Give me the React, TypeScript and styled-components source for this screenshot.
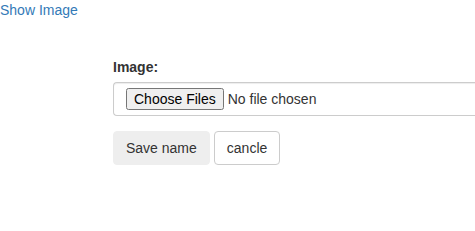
import React from "react";
import styled, { createGlobalStyle } from "styled-components";

const Global = createGlobalStyle`
  html, body { margin: 0; padding: 0; background: #fff; overflow: hidden; }
  body {
    font-family: "Liberation Sans", Arial, Helvetica, sans-serif;
    font-size: 14px;
    line-height: 20px;
    color: #333;
  }
  * { box-sizing: border-box; }
`;

const Page = styled.div`
  display: flex;
  flex-direction: column;
  width: 475px;
  height: 231px;
  overflow: hidden;
`;

const TopLink = styled.a`
  color: #337ab7;
  text-decoration: none;
  line-height: 20px;
  align-self: flex-start;
`;

const Form = styled.form`
  margin-top: 37px;
  padding-left: 113px;
  display: flex;
  flex-direction: column;
  min-width: 0;
`;

const Group = styled.div`
  display: flex;
  flex-direction: column;
  margin-bottom: 15px;
`;

const Label = styled.label`
  font-weight: bold;
  margin-bottom: 5px;
  line-height: 20px;
`;

const FileBox = styled.div`
  width: 370px;
  flex-shrink: 0;
  height: 34px;
  border: 1px solid #ccc;
  border-right: none;
  border-radius: 4px 0 0 4px;
  padding: 5px 12px;
  display: flex;
  align-items: center;
  box-shadow: inset 0 1px 1px rgba(0, 0, 0, 0.075);
`;

const FileInput = styled.input`
  font-family: "Liberation Sans", Arial, sans-serif;
  font-size: 14px;
  color: #333;
`;

const Actions = styled.div`
  display: flex;
  gap: 4px;
`;

const Button = styled.button<{ $variant?: "muted" | "plain" }>`
  height: 34px;
  padding: 6px 12px;
  font-family: "Liberation Sans", Arial, sans-serif;
  font-size: 14px;
  line-height: 20px;
  color: #333;
  border-radius: 4px;
  border: 1px solid ${(p) => (p.$variant === "muted" ? "#eeeeee" : "#ccc")};
  background: ${(p) => (p.$variant === "muted" ? "#eeeeee" : "#fff")};
  cursor: pointer;
`;

export default function App() {
  return (
    <>
      <Global />
      <Page>
        <TopLink href="#">Show Image</TopLink>
        <Form onSubmit={(e) => e.preventDefault()}>
          <Group>
            <Label>Image:</Label>
            <FileBox>
              <FileInput type="file" multiple />
            </FileBox>
          </Group>
          <Actions>
            <Button type="submit" $variant="muted">Save name</Button>
            <Button type="button" $variant="plain">cancle</Button>
          </Actions>
        </Form>
      </Page>
    </>
  );
}
